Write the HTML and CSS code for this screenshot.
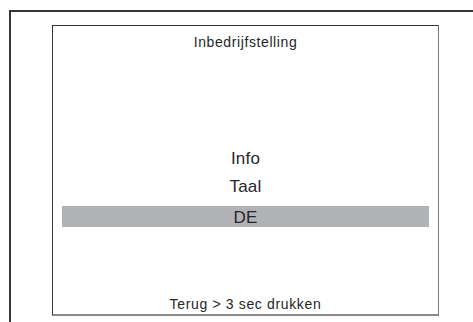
FILE: index.html
```html
<!DOCTYPE html>
<html lang="nl">
<head>
<meta charset="utf-8">
<title>Inbedrijfstelling</title>
<link rel="stylesheet" href="styles.css">
</head>
<body>
<div class="frame">
  <div class="screen">
    <div class="title">Inbedrijfstelling</div>
    <ul class="menu">
      <li class="item">Info</li>
      <li class="item">Taal</li>
      <li class="item selected">DE</li>
    </ul>
    <div class="footer">Terug &gt; 3 sec drukken</div>
  </div>
</div>
</body>
</html>
```
FILE: styles.css
```css
html, body {
  margin: 0;
  padding: 0;
  background: #ffffff;
  overflow: hidden;
}
body {
  width: 473px;
  height: 322px;
  font-family: "Liberation Sans", Arial, sans-serif;
  color: #262626;
}
.frame {
  box-sizing: border-box;
  margin: 10px 0 0 9px;
  width: 464px;
  height: 312px;
  border-top: 2px solid #363636;
  border-left: 2px solid #363636;
}
.screen {
  box-sizing: border-box;
  margin: 13px 0 0 41px;
  width: 387px;
  height: 291px;
  border-top: 1px solid #333333;
  border-left: 1px solid #333333;
  border-right: 1px solid #7a7a7a;
  border-bottom: 2px solid #8a8a8a;
  display: flex;
  flex-direction: column;
}
.title {
  margin-top: 8px;
  font-size: 14px;
  line-height: 16px;
  letter-spacing: 0.6px;
  text-align: center;
}
.menu {
  list-style: none;
  margin: 95px 0 0 0;
  padding: 0;
  display: flex;
  flex-direction: column;
}
.item {
  font-size: 17px;
  line-height: 28px;
  letter-spacing: 0.2px;
  text-align: center;
}
.item.selected {
  margin: 5px 9px 0 9px;
  height: 21px;
  line-height: 23px;
  background: #b1b2b5;
}
.footer {
  margin-top: auto;
  margin-bottom: 2px;
  font-size: 14px;
  line-height: 16px;
  letter-spacing: 0.65px;
  text-align: center;
}
```
